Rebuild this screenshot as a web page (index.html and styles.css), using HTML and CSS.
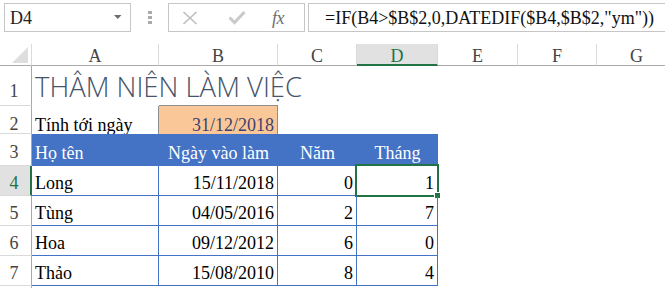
FILE: index.html
```html
<!DOCTYPE html>
<html lang="vi">
<head>
<meta charset="utf-8">
<title>Thâm niên làm việc</title>
<link rel="stylesheet" href="styles.css">
</head>
<body>
<div class="app">
  <div class="toolbar">
    <div class="namebox">
      <span class="ref">D4</span>
      <svg class="dd" width="8" height="4" viewBox="0 0 8 4"><path d="M0 0H7.5L3.75 4Z" fill="#6d6d6d"/></svg>
    </div>
    <div class="grip"><i></i><i></i><i></i></div>
    <div class="fxbox">
      <svg class="ic-x" width="16" height="14" viewBox="0 0 16 14"><path d="M1.5 1L14.5 13M14.5 1L1.5 13" stroke="#bdbdbd" stroke-width="1.6" fill="none"/></svg>
      <svg class="ic-ok" width="18" height="15" viewBox="0 0 18 15"><path d="M1.5 7.5L6.5 12.5L16.5 2" stroke="#c9c9c9" stroke-width="3" fill="none"/></svg>
      <span class="fx">fx</span>
    </div>
    <div class="formula">=IF(B4&gt;$B$2,0,DATEDIF($B4,$B$2,"ym"))</div>
  </div>

  <div class="sheet">
    <div class="corner"><svg width="16" height="16" viewBox="0 0 16 16"><path d="M16 0V16H0Z" fill="#dedede"/></svg></div>
    <div class="ch">A</div>
    <div class="ch">B</div>
    <div class="ch">C</div>
    <div class="ch sel">D</div>
    <div class="ch">E</div>
    <div class="ch">F</div>
    <div class="ch">G</div>

    <div class="rh r1">1</div>
    <div class="c title">THÂM NIÊN LÀM VIỆC</div>
    <div class="c b1"></div>
    <div class="c"></div><div class="c"></div><div class="c"></div><div class="c"></div><div class="c"></div>

    <div class="rh r2">2</div>
    <div class="c r2 a2">Tính tới ngày</div>
    <div class="c r2 b2 num">31/12/2018</div>
    <div class="c r2"></div><div class="c r2"></div><div class="c r2"></div><div class="c r2"></div><div class="c r2"></div>

    <div class="rh r3">3</div>
    <div class="c th">Họ tên</div>
    <div class="c th mid">Ngày vào làm</div>
    <div class="c th mid">Năm</div>
    <div class="c th mid">Tháng</div>
    <div class="c"></div><div class="c"></div><div class="c"></div>

    <div class="rh sel">4</div>
    <div class="c td">Long</div>
    <div class="c td num">15/11/2018</div>
    <div class="c td num">0</div>
    <div class="c td num active">1<span class="selbox"></span><span class="handle"></span></div>
    <div class="c"></div><div class="c"></div><div class="c"></div>

    <div class="rh">5</div>
    <div class="c td">Tùng</div>
    <div class="c td num">04/05/2016</div>
    <div class="c td num">2</div>
    <div class="c td num">7</div>
    <div class="c"></div><div class="c"></div><div class="c"></div>

    <div class="rh">6</div>
    <div class="c td">Hoa</div>
    <div class="c td num">09/12/2012</div>
    <div class="c td num">6</div>
    <div class="c td num">0</div>
    <div class="c"></div><div class="c"></div><div class="c"></div>

    <div class="rh">7</div>
    <div class="c td">Thảo</div>
    <div class="c td num">15/08/2010</div>
    <div class="c td num">8</div>
    <div class="c td num">4</div>
    <div class="c"></div><div class="c"></div><div class="c"></div>

    <div class="rh"></div>
    <div class="c"></div><div class="c"></div><div class="c"></div><div class="c"></div><div class="c"></div><div class="c"></div><div class="c"></div>
  </div>
</div>
</body>
</html>
```

FILE: styles.css
```css
* { box-sizing: border-box; }
html, body { margin: 0; padding: 0; background: #fff; }
body { width: 665px; height: 288px; overflow: hidden; font-family: "Liberation Serif", "Times New Roman", serif; font-size: 18px; color: #000; }
.app { width: 665px; height: 288px; overflow: hidden; }

.toolbar { height: 44px; display: flex; align-items: flex-start; padding: 3px 0 0 4px; }
.namebox { width: 127px; height: 29px; border: 1px solid #c6c6c6; display: flex; align-items: center; justify-content: space-between; padding: 0 8px 0 5px; }
.ref { font-size: 18px; line-height: 20px; color: #222; padding-top: 1px; }
.dd { margin-top: -1px; }
.grip { width: 4px; height: 29px; margin: 0 16px 0 17px; display: flex; flex-direction: column; justify-content: center; gap: 2px; }
.grip i { display: block; width: 4px; height: 3px; background: #ababab; }
.fxbox { width: 137px; height: 29px; border: 1px solid #c6c6c6; display: flex; align-items: center; padding-left: 13px; }
.ic-x { margin-right: 30px; }
.ic-ok { margin-right: 26px; }
.fx { font-style: italic; font-size: 18px; color: #6e6e6e; letter-spacing: -0.5px; line-height: 20px; }
.formula { flex: 1; margin-left: 3px; margin-right: -6px; height: 29px; border: 1px solid #c6c6c6; padding: 0 0 0 16px; display: flex; align-items: center; white-space: nowrap; font-size: 18px; line-height: 20px; color: #111; }

.sheet { display: grid; grid-template-columns: 32px 127px 119px 79px 81px 80px 79px 80px; grid-template-rows: 22px 40px 28px 32px 30px 30px 30px 30px 30px; }
.corner { border-right: 1px solid #dadada; border-bottom: 1px solid #ababab; display: flex; align-items: flex-end; justify-content: flex-end; padding: 0 3px 2px 0; }
.ch { border-right: 1px solid #dadada; border-bottom: 1px solid #ababab; display: flex; align-items: flex-end; justify-content: center; padding-bottom: 0; color: #444; line-height: 18px; }
.ch.sel { background: #e1e1e1; color: #217346; border-bottom: 2px solid #217346; line-height: 16px; }
.rh { border-right: 1px solid #a8a8a8; border-bottom: 1px solid #dadada; display: flex; align-items: flex-end; justify-content: center; padding: 0 3px 2px 0; color: #444; line-height: 20px; }
.rh.r1 { padding-bottom: 4px; }
.rh.r2 { padding-bottom: 0; line-height: 18px; }
.rh.r3 { padding-bottom: 3px; }
.rh.sel { background: #e1e1e1; color: #217346; border-right: 2px solid #217346; padding-right: 2px; }

.c { display: flex; align-items: flex-end; padding: 0 3px 2px 3px; line-height: 20px; white-space: nowrap; position: relative; }
.title { font-family: "Open Sans", "Liberation Sans", sans-serif; font-weight: 300; font-size: 27.5px; line-height: 30px; color: #44546a; padding-bottom: 4px; overflow: visible; }
.b1 { border-bottom: 1px solid #8f8f8f; }
.c.r2 { padding-bottom: 0; line-height: 18px; }
.a2 { border-right: 1px solid #8f8f8f; }
.b2 { background: #fac898; border-right: 1px solid #8f8f8f; color: #3d416f; }
.num { justify-content: flex-end; }
.th { background: #4472c4; color: #fff; padding-bottom: 3px; }
.th.mid { justify-content: center; }
.td { border-right: 1px solid #4472c4; border-bottom: 1px solid #4472c4; }
.active { overflow: visible; }
.selbox { position: absolute; inset: -2px; border: 2px solid #217346; pointer-events: none; }
.handle { position: absolute; right: -4px; bottom: -4px; width: 7px; height: 7px; background: #217346; border: 1px solid #fff; }
```
